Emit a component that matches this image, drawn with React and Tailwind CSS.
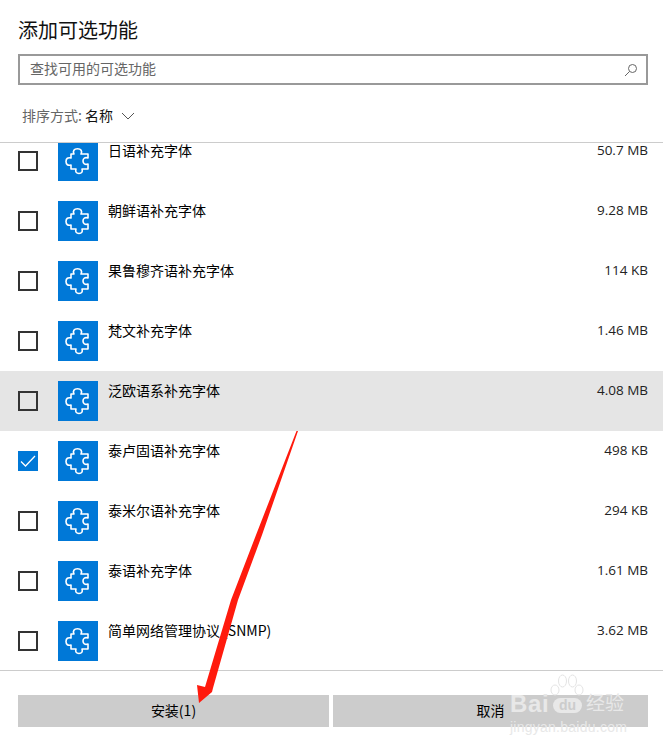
import React from 'react';

const rows = [
  { name: '日语补充字体', size: '50.7 MB' },
  { name: '朝鲜语补充字体', size: '9.28 MB' },
  { name: '果鲁穆齐语补充字体', size: '114 KB' },
  { name: '梵文补充字体', size: '1.46 MB' },
  { name: '泛欧语系补充字体', size: '4.08 MB', hover: true },
  { name: '泰卢固语补充字体', size: '498 KB', checked: true },
  { name: '泰米尔语补充字体', size: '294 KB' },
  { name: '泰语补充字体', size: '1.61 MB' },
  { name: '简单网络管理协议 (SNMP)', size: '3.62 MB' },
];

const PuzzleIcon = () => (
  <div className="w-10 h-10 bg-[#0078d7] shrink-0">
    <svg width="40" height="40" viewBox="0 0 40 40" fill="none" stroke="white" strokeWidth="1.6" strokeLinejoin="round">
      <path d="M16 13C14.5 10 16 7.8 19.5 7.8C23 7.8 24.5 10 23 13L30 13L30 17C27 16 25 17.5 25 20C25 22.5 27 24 30 23L30 28L24 28C25 31 23.5 32.5 21 32.5C18.5 32.5 17 31 18 28L13 28L13 24C10 25 8 23.5 8 20.5C8 17.5 10 16 13 17L13 13Z" />
    </svg>
  </div>
);

const Checkbox = ({ checked }) =>
  checked ? (
    <div className="w-5 h-5 bg-[#0078d7] shrink-0">
      <svg width="20" height="20" viewBox="0 0 20 20" fill="none" stroke="white" strokeWidth="1.3">
        <path d="M3 10.5L7.5 15L17 5" />
      </svg>
    </div>
  ) : (
    <div className="w-5 h-5 border-2 border-[#333333] shrink-0" />
  );

const Row = ({ row }) => (
  <div className={`h-[60px] pl-[18px] pr-[15px] flex items-start ${row.hover ? 'bg-[#e5e5e5]' : ''}`}>
    <div className="mt-5">
      <Checkbox checked={row.checked} />
    </div>
    <div className="mt-2.5 ml-5">
      <PuzzleIcon />
    </div>
    <div className="ml-2.5 mt-[11px] text-sm leading-4 text-black flex-1">{row.name}</div>
    <div className="mt-[11px] text-[13.5px] leading-4 text-[#222222] font-['Open_Sans','Noto_Sans_CJK_SC',sans-serif]">{row.size}</div>
  </div>
);

export default function App() {
  return (
    <div className="relative w-[663px] h-[746px] bg-white overflow-hidden font-['Noto_Sans_CJK_SC','Open_Sans',sans-serif]">
      {/* Header */}
      <div className="h-[142px] pl-[18px] pr-[15px] pt-[16px]">
        <h1 className="text-xl leading-7 text-[#111111]">添加可选功能</h1>
        <div className="mt-[10px] h-[31px] w-[630px] border-2 border-[#999999] flex items-center justify-between pl-[10px] pr-[8px]">
          <span className="text-sm leading-5 -mt-[3px] text-[#666666]">查找可用的可选功能</span>
          <svg width="14" height="14" viewBox="0 0 14 14" fill="none" stroke="#666666" strokeWidth="1">
            <circle cx="8.5" cy="5.5" r="4" />
            <path d="M5.5 8.5L1 13" />
          </svg>
        </div>
        <div className="mt-[21px] ml-1 flex items-center text-sm leading-5">
          <span className="text-[#666666] -mt-px">排序方式:</span>
          <span className="ml-[3px] text-[#111111] -mt-px">名称</span>
          <svg className="ml-2" width="14" height="8" viewBox="0 0 14 8" fill="none" stroke="#555555" strokeWidth="1">
            <path d="M1 1L7 7L13 1" />
          </svg>
        </div>
      </div>

      {/* List */}
      <div className="h-[529px] border-y border-[#cccccc] overflow-hidden">
        <div className="-mt-3">
          {rows.map((row) => (
            <Row key={row.name} row={row} />
          ))}
        </div>
      </div>

      {/* Buttons */}
      <div className="mt-6 pl-[18px] pr-[15px] flex gap-1">
        <button className="w-[311px] h-8 bg-[#cccccc] text-sm text-black pb-[3px]">安装(1)</button>
        <button className="w-[315px] h-8 bg-[#cccccc] text-sm text-black pb-[3px]">取消</button>
      </div>

      {/* Red arrow painted on the screenshot */}
      <svg className="absolute inset-0 pointer-events-none" width="663" height="746">
        <polygon fill="#ff1a0d" points="296.5,431 298,431 262,535 238,600 213,688 212,692 199,703 197,685 205,687 231,600 256,535" />
      </svg>

      {/* Watermark */}
      <div className="absolute left-[510px] top-[672px] w-[153px] h-[74px] pointer-events-none text-[#e8e8e8] font-['Liberation_Sans',sans-serif]">
        <svg className="absolute left-[40px] top-[2px]" width="34" height="24" viewBox="0 0 34 24" fill="none" stroke="#e4e4e4" strokeWidth="1">
          <ellipse cx="5" cy="16" rx="4" ry="5" />
          <ellipse cx="12.5" cy="7" rx="4" ry="6" />
          <ellipse cx="22.5" cy="7" rx="4" ry="6" />
          <ellipse cx="29" cy="16" rx="4" ry="5" />
        </svg>
        <span className="absolute left-0 top-[18px] text-[24px] leading-7 font-bold tracking-wide">Bai</span>
        <span className="absolute left-[43px] top-[26px] w-[29px] h-[15px] rounded-full bg-[#e8e8e8] text-[#cccccc] text-[14px] leading-[15px] font-bold text-center">du</span>
        <span className="absolute left-[76px] top-[18px] text-[19px] leading-6 font-['Noto_Sans_CJK_SC',sans-serif]">经验</span>
        <span className="absolute left-0 top-[45px] text-sm leading-5 tracking-[0.25px] whitespace-nowrap">jingyan.baidu.com</span>
      </div>
    </div>
  );
}
